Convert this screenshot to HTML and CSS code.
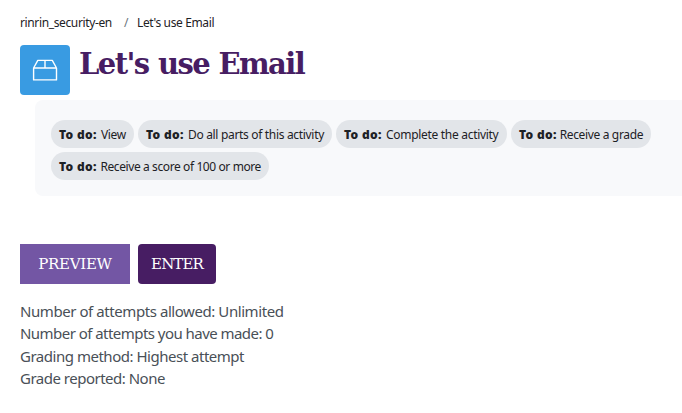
FILE: index.html
```html
<!DOCTYPE html>
<html lang="en">
<head>
<meta charset="utf-8">
<title>Let's use Email</title>
<link rel="stylesheet" href="styles.css">
</head>
<body>
<nav class="breadcrumb"><a class="course">rinrin_security-en</a><span class="sep">/</span><a class="current">Let's use Email</a></nav>
<header class="page-header">
  <div class="activity-icon">
    <svg width="50" height="50" viewBox="0 0 50 50" fill="none" stroke="#fff" stroke-width="1.4" stroke-linejoin="round"><path d="M13.6 23h22.9v11.9h-22.9zM13.6 23l4.2-7.6h14.5l4.2 7.6M25 15.4v7.6"/></svg>
  </div>
  <h1>Let's use Email</h1>
</header>
<section class="completion">
  <span class="badge view"><strong>To do:</strong> <span>View</span></span>
  <span class="badge parts"><strong>To do:</strong> <span>Do all parts of this activity</span></span>
  <span class="badge complete"><strong>To do:</strong> <span>Complete the activity</span></span>
  <span class="badge grade"><strong>To do:</strong> <span>Receive a grade</span></span>
  <span class="badge score"><strong>To do:</strong> <span>Receive a score of 100 or more</span></span>
</section>
<div class="actions">
  <button class="preview">PREVIEW</button>
  <button class="enter">ENTER</button>
</div>
<div class="details">
  <div class="l1">Number of attempts allowed: Unlimited</div>
  <div class="l2">Number of attempts you have made: 0</div>
  <div class="l3">Grading method: Highest attempt</div>
  <div class="l4">Grade reported: None</div>
</div>
</body>
</html>
```
FILE: styles.css
```css
* { box-sizing: border-box; }
body { margin: 0; padding: 14px 0 0 20px; height: 413px; overflow: hidden; background: #fff; font-family: "Noto Sans", "Open Sans", sans-serif; color: #1d2125; }
.breadcrumb { display: flex; height: 18px; line-height: 18px; font-size: 12px; white-space: nowrap; }
.course { width: 104px; letter-spacing: -0.37px; }
.sep { width: 13px; color: #6a737b; }
.current { letter-spacing: -0.37px; }
.page-header { display: flex; margin-top: 13px; height: 50px; }
.activity-icon { width: 50px; height: 50px; border-radius: 4px; background: #399be2; }
.activity-icon svg { display: block; }
h1 { margin: 0 0 0 9px; font: bold 29px/38px "DejaVu Serif", serif; letter-spacing: -1.6px; word-spacing: 1px; color: #471d63; white-space: nowrap; }
.completion { display: flex; flex-wrap: wrap; align-content: flex-start; gap: 4px; margin: 5px 0 0 15px; padding: 20px 16px; width: 647px; height: 96px; border-radius: 8px 0 0 8px; background: #f8f9fb; }
.badge { display: flex; align-items: center; height: 28px; padding: 0 8px; gap: 3px; border-radius: 14px; background: #e2e5e9; font-size: 12px; white-space: nowrap; letter-spacing: -0.35px; }
.badge strong { width: 39px; font-weight: 900; letter-spacing: 0.3px; }
.view { width: 83px; }
.parts { width: 194px; letter-spacing: -0.32px; }
.complete { width: 171px; letter-spacing: -0.3px; }
.grade { width: 140px; }
.score { width: 218px; letter-spacing: -0.4px; }
.actions { display: flex; gap: 8px; margin-top: 48px; }
button { height: 40px; padding: 0; border: 0; color: #fff; font: 15px/40px "DejaVu Serif", serif; white-space: nowrap; }
.preview { width: 110px; background: #7356a4; letter-spacing: -0.3px; }
.enter { width: 78px; border-radius: 4px; background: #471d63; letter-spacing: -0.9px; }
.details { margin-top: 16px; font-size: 15px; line-height: 22.3px; letter-spacing: -0.43px; color: #495057; white-space: nowrap; }
.l2 { letter-spacing: -0.54px; }
.l3 { letter-spacing: -0.48px; }
.l4 { letter-spacing: -0.5px; }
```
